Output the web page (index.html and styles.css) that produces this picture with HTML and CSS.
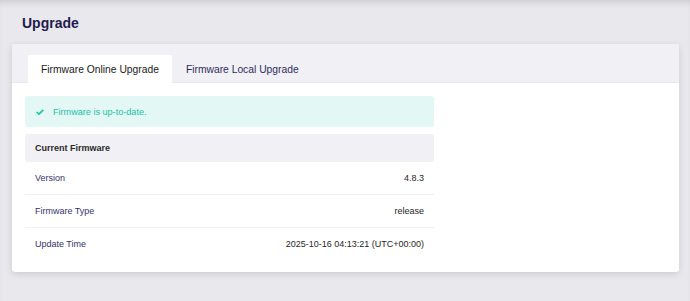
FILE: index.html
```html
<!DOCTYPE html>
<html>
<head>
<meta charset="utf-8">
<link rel="stylesheet" href="styles.css">
</head>
<body>
<div class="page">
  <h1 class="title">Upgrade</h1>
  <div class="card">
    <div class="tabs">
      <div class="tab active">Firmware Online Upgrade</div>
      <div class="tab">Firmware Local Upgrade</div>
    </div>
    <div class="content">
      <div class="alert">
        <svg class="check" width="8" height="6" viewBox="0 0 8 6"><path d="M0.7 3 L3 5.2 L7.3 0.8" fill="none" stroke="#1fc7a8" stroke-width="1.7"/></svg>
        <span>Firmware is up-to-date.</span>
      </div>
      <div class="section-head">Current Firmware</div>
      <div class="row"><span class="label">Version</span><span class="value">4.8.3</span></div>
      <div class="row"><span class="label">Firmware Type</span><span class="value">release</span></div>
      <div class="row last"><span class="label">Update Time</span><span class="value">2025-10-16 04:13:21 (UTC+00:00)</span></div>
    </div>
  </div>
</div>
</body>
</html>
```
FILE: styles.css
```css
html, body {
  margin: 0;
  padding: 0;
}
body {
  background: #e9e8ed;
  font-family: "Liberation Sans", Arial, sans-serif;
  box-shadow: inset 0 6px 7px -4px rgba(0,0,0,0.14);
  min-height: 301px;
}
.page {
  padding: 13px 11px 0 12px;
}
.title {
  margin: 0 0 11px 10px;
  font-size: 14px;
  line-height: 20px;
  font-weight: bold;
  color: #1f1c4e;
}
.card {
  width: 667px;
  background: #fff;
  border-radius: 3px;
  box-shadow: 0 2px 7px rgba(0,0,0,0.13);
  overflow: hidden;
  padding-bottom: 12px;
}
.tabs {
  display: flex;
  background: #f1f0f5;
  border-bottom: 1px solid #e8e7ee;
  padding: 11px 0 0 16px;
  height: 27px;
}
.tab {
  font-size: 10.3px;
  color: #2f2c5c;
  padding: 0 14px;
  line-height: 29px;
}
.tab.active {
  background: #fff;
  color: #1a1a1a;
  padding: 0 13px;
  border-radius: 2px 2px 0 0;
  height: 28px;
}
.content {
  padding: 13px 0 0 13px;
  width: 409px;
}
.alert {
  display: flex;
  align-items: center;
  background: #e3f7f5;
  border-radius: 3px;
  height: 31px;
  padding-left: 11px;
  color: #1bc2a3;
  font-size: 9.1px;
}
.check {
  margin-right: 9px;
}
.section-head {
  margin-top: 7px;
  background: #f1f0f5;
  border-radius: 3px;
  height: 28px;
  line-height: 29px;
  padding-left: 10px;
  font-size: 9px;
  font-weight: bold;
  color: #2b2b2b;
}
.row {
  display: flex;
  justify-content: space-between;
  align-items: center;
  height: 32px;
  border-bottom: 1px solid #f0eff3;
  padding: 0 10px;
  font-size: 9px;
}
.row.last {
  border-bottom: none;
}
.label {
  color: #36336a;
}
.value {
  color: #262626;
}
```
